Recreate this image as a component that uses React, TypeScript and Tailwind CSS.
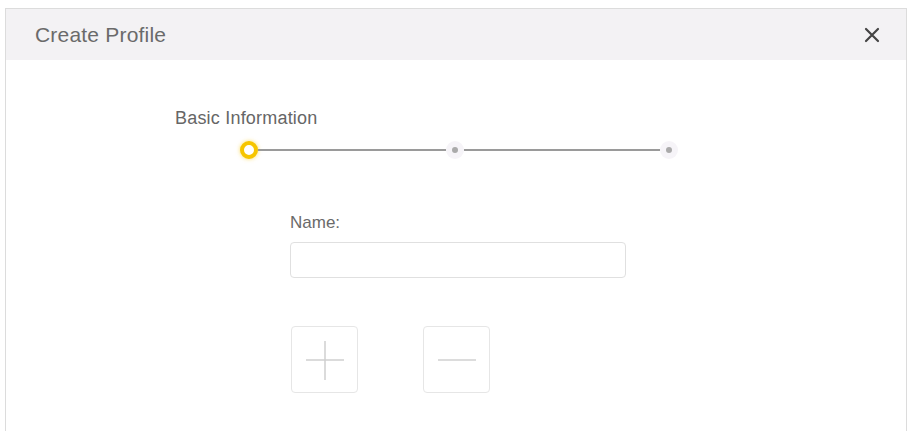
export default function App() {
  return (
    <div className="w-[912px] h-[431px] bg-white overflow-hidden pl-[5px] pr-[5px] pt-[8px]" style={{ fontFamily: '"Liberation Sans", Arial, sans-serif' }}>
      <div className="h-[440px] border border-[#dcdcdc] bg-white">
        {/* Header */}
        <div className="h-[51px] bg-[#f3f2f4] flex items-center justify-between pl-[29px] pr-[26px]">
          <span className="text-[21px] text-[#6a6a6a] tracking-[0.2px]">Create Profile</span>
          <svg className="w-[16px] h-[16px]" viewBox="0 0 16 16" fill="none" stroke="#444" strokeWidth={2.2} strokeLinecap="round">
            <path d="M2 2l12 12M14 2L2 14" />
          </svg>
        </div>

        {/* Stepper */}
        <div className="pl-[169px] pt-[47px]">
          <div className="text-[18px] text-[#666] leading-[22px] tracking-[0.2px]">Basic Information</div>
          <div className="flex items-center mt-[11px] ml-[65px] h-[20px]">
            <div className="w-[18px] h-[18px] rounded-full border-[4px] border-[#f6c500] bg-white shadow-[0_0_4px_rgba(246,197,0,0.6)]" />
            <div className="w-[188px] h-[1.5px] bg-[#9a9a9a]" />
            <div className="w-[18px] h-[18px] rounded-full bg-[#f6f4f8] flex items-center justify-center">
              <div className="w-[6px] h-[6px] rounded-full bg-[#aaa]" />
            </div>
            <div className="w-[196px] h-[1.5px] bg-[#9a9a9a]" />
            <div className="w-[18px] h-[18px] rounded-full bg-[#f6f4f8] flex items-center justify-center">
              <div className="w-[6px] h-[6px] rounded-full bg-[#aaa]" />
            </div>
          </div>
        </div>

        {/* Form */}
        <div className="pl-[284px] pt-[53px]">
          <div className="text-[17px] text-[#6a6a6a] leading-[20px]">Name:</div>
          <input className="mt-[9px] w-[336px] h-[36px] border border-[#e0e0e0] rounded-[4px] outline-none px-2 text-[14px]" />
          <div className="flex gap-[65px] mt-[48px] ml-[1px]">
            <button className="w-[67px] h-[67px] border border-[#e6e6e6] rounded-[4px] flex items-center justify-center">
              <svg className="w-[40px] h-[40px]" viewBox="0 0 40 40" fill="none" stroke="#d0d0d0" strokeWidth={1.5}>
                <path d="M20 1v39M1 20h38" />
              </svg>
            </button>
            <button className="w-[67px] h-[67px] border border-[#e6e6e6] rounded-[4px] flex items-center justify-center">
              <svg className="w-[40px] h-[40px]" viewBox="0 0 40 40" fill="none" stroke="#d0d0d0" strokeWidth={1.5}>
                <path d="M1 20h38" />
              </svg>
            </button>
          </div>
        </div>
      </div>
    </div>
  );
}
